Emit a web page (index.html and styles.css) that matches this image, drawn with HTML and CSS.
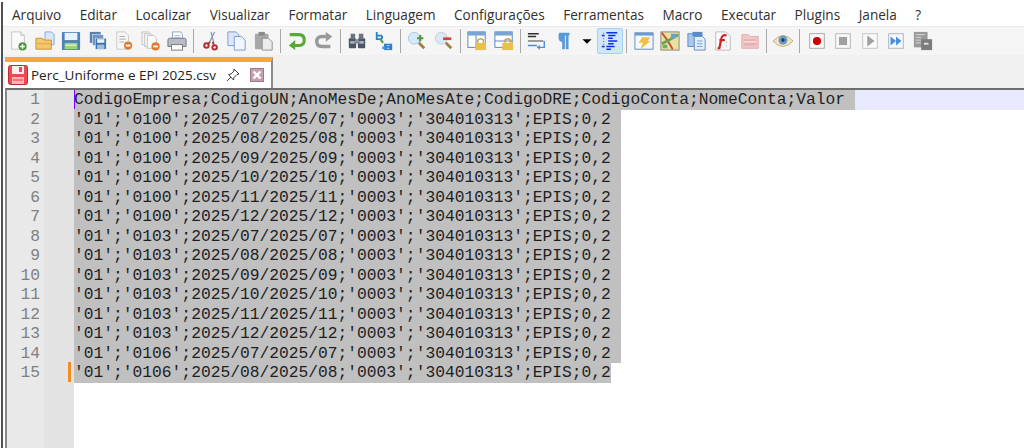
FILE: index.html
```html
<!DOCTYPE html>
<html lang="pt">
<head>
<meta charset="utf-8">
<title>Notepad++</title>
<link rel="stylesheet" href="styles.css">
</head>
<body>
<div class="app">
  <nav class="menu">
    <span>Arquivo</span><span>Editar</span><span>Localizar</span><span>Visualizar</span><span>Formatar</span><span>Linguagem</span><span>Configurações</span><span>Ferramentas</span><span>Macro</span><span>Executar</span><span>Plugins</span><span>Janela</span><span>?</span>
  </nav>
  <div class="toolbar">
    <div class="btn"><svg viewBox="0 0 22 22"><path d="M4 1h10l4 4v15H4z" fill="#fafafa" stroke="#c4c4c4"/><path d="M14 1v4h4" fill="#e8e8e8" stroke="#c4c4c4"/><circle cx="16" cy="17" r="4.5" fill="#4c9a3c"/><path d="M13.500 17h5M16 14.500v5" stroke="#fff" stroke-width="1.500"/></svg></div>
    <div class="btn"><svg viewBox="0 0 22 22"><path d="M11 1h7l3 3v11H11z" fill="#d8e8f8" stroke="#7aa6d8"/><path d="M1 8h7l2 2h8v10H1z" fill="#f4c86a" stroke="#c49030"/><path d="M2 14h16" stroke="#e0a040"/></svg></div>
    <div class="btn"><svg viewBox="0 0 22 22"><rect x="1" y="1" width="20" height="20" rx="1" fill="#4f81bd"/><rect x="4" y="2" width="14" height="8" fill="#e8f0f8"/><rect x="4" y="13" width="14" height="7" fill="#9ed07a"/><rect x="5" y="15" width="12" height="1" fill="#fff"/></svg></div>
    <div class="btn"><svg viewBox="0 0 22 22"><rect x="2" y="1" width="12" height="12" fill="#5a82b0"/><rect x="5" y="4" width="12" height="12" fill="#7096c4" stroke="#fff" stroke-width=".5"/><rect x="8" y="8" width="12" height="12" fill="#3f6fa8" stroke="#fff" stroke-width=".5"/><rect x="10" y="9" width="8" height="4" fill="#e8f0f8"/><rect x="10" y="15" width="8" height="5" fill="#9ec0e0"/></svg></div>
    <div class="btn"><svg viewBox="0 0 22 22"><path d="M3 1h9l4 4v15H3z" fill="#f6f6f6" stroke="#c8c8c8"/><path d="M6 6h6M6 9h7M6 12h5" stroke="#a8a8a8"/><circle cx="15.500" cy="16" r="4.500" fill="#e07a30"/><rect x="13" y="15" width="5" height="2" fill="#fff"/></svg></div>
    <div class="btn"><svg viewBox="0 0 22 22"><path d="M1 1h7l3 3v11H1z" fill="#f2f2f2" stroke="#c0c0c0"/><path d="M4 3h7l3 3v11H4z" fill="#f6f6f6" stroke="#c0c0c0"/><path d="M7 5h7l3 3v11H7z" fill="#fafafa" stroke="#c0c0c0"/><circle cx="16" cy="17" r="4.500" fill="#e07a30"/><rect x="13.500" y="16" width="5" height="2" fill="#fff"/></svg></div>
    <div class="btn"><svg viewBox="0 0 22 22"><path d="M6 1h9l2 3v6H6z" fill="#fff" stroke="#8aa0c0"/><path d="M8 5h7M8 7h7" stroke="#a8c0e0"/><path d="M1 10q0-2 2-2h16q2 0 2 2v7H1z" fill="#b8bcc4" stroke="#70747c"/><rect x="5" y="15" width="12" height="6" fill="#fff" stroke="#70747c"/></svg></div>
    <i class="sep"></i>
    <div class="btn"><svg viewBox="0 0 22 22"><path d="M15 1L9 13M11 1l3 12" stroke="#8090b0" stroke-width="1.300" fill="none"/><circle cx="6" cy="16" r="3.500" fill="#b03030"/><circle cx="6" cy="16" r="1.300" fill="#f5f5f5"/><circle cx="15" cy="18" r="3.500" fill="#b03030"/><circle cx="15" cy="18" r="1.300" fill="#f5f5f5"/><path d="M8 14l2-2M14 15l-1-3" stroke="#b03030" stroke-width="2"/></svg></div>
    <div class="btn"><svg viewBox="0 0 22 22"><path d="M1 1h9l3 3v12H1z" fill="#dce8f8" stroke="#6e9ad0"/><path d="M8 6h8l4 4v11H8z" fill="#f0f6fc" stroke="#6e9ad0"/></svg></div>
    <div class="btn"><svg viewBox="0 0 22 22"><rect x="1" y="3" width="15" height="17" rx="1" fill="#a8a8a8"/><rect x="5" y="1" width="7" height="4" fill="#8a8a8a"/><path d="M9 8h7l4 4v9H9z" fill="#ececec" stroke="#8c8c8c"/></svg></div>
    <i class="sep"></i>
    <div class="btn"><svg viewBox="0 0 22 22"><path d="M3 4h10q6 0 6 6t-6 6H7" fill="none" stroke="#58a83a" stroke-width="3.400"/><path d="M9 10l-7 6 7 5z" fill="#58a83a"/></svg></div>
    <div class="btn"><svg viewBox="0 0 22 22"><path d="M14 6H9q-6 0-6 5.500T9 17h9" fill="none" stroke="#9a9a9a" stroke-width="3.800"/><path d="M13 1l7 5-7 6z" fill="#9a9a9a"/></svg></div>
    <i class="sep"></i>
    <div class="btn"><svg viewBox="0 0 22 22"><rect x="2" y="8" width="8" height="11" rx="1" fill="#4c5460"/><rect x="12" y="8" width="8" height="11" rx="1" fill="#4c5460"/><rect x="4" y="3" width="5" height="6" fill="#6a7280"/><rect x="13" y="3" width="5" height="6" fill="#6a7280"/><rect x="9" y="9" width="4" height="5" fill="#8a929e"/><rect x="3.500" y="11" width="5" height="3" fill="#a8b0bc"/><rect x="13.500" y="11" width="5" height="3" fill="#a8b0bc"/></svg></div>
    <div class="btn"><svg viewBox="0 0 22 22"><path d="M3 1v8h5q2-2 0-4H3" fill="none" stroke="#2f7fd0" stroke-width="2"/><path d="M7 9l3 4" stroke="#5a9a40" stroke-width="2.200"/><path d="M11 14h9v7h-9z" fill="#2f7fd0"/><path d="M14 16h3M14 19h3" stroke="#cfe2f6"/><rect x="9" y="17" width="3" height="3" fill="#5a9ad8"/></svg></div>
    <i class="sep"></i>
    <div class="btn"><svg viewBox="0 0 22 22"><circle cx="8" cy="8" r="6.500" fill="#d4e8f8" stroke="#a8c8e8"/><path d="M13 13l6 6" stroke="#a08040" stroke-width="3"/><path d="M11 8h7M14.500 4.500v7" stroke="#4e9a3a" stroke-width="2.400"/></svg></div>
    <div class="btn"><svg viewBox="0 0 22 22"><circle cx="8" cy="8" r="6.500" fill="#dce8f4" stroke="#b8cce0"/><path d="M13 13l6 6" stroke="#a08040" stroke-width="3"/><rect x="10" y="7" width="9" height="3" fill="#d84040"/></svg></div>
    <i class="sep"></i>
    <div class="btn"><svg viewBox="0 0 22 22"><rect x="1" y="1" width="19" height="17" fill="#fff" stroke="#4f7eb8"/><rect x="1" y="1" width="19" height="4" fill="#7aa4d4"/><path d="M10 5v13" stroke="#4f7eb8"/><rect x="9" y="13" width="12" height="8" fill="#e8c050"/><path d="M12 13v-3q3-3 6 0v3" fill="none" stroke="#c8a030" stroke-width="1.500"/></svg></div>
    <div class="btn"><svg viewBox="0 0 22 22"><rect x="1" y="1" width="19" height="17" fill="#fff" stroke="#4f7eb8"/><rect x="1" y="1" width="19" height="4" fill="#7aa4d4"/><path d="M1 11h19" stroke="#4f7eb8"/><rect x="9" y="13" width="12" height="8" fill="#e8c050"/><path d="M12 13v-3q3-3 6 0v3" fill="none" stroke="#c8a030" stroke-width="1.500"/></svg></div>
    <i class="sep"></i>
    <div class="btn"><svg viewBox="0 0 22 22"><path d="M1 3h12M1 6h9" stroke="#303030" stroke-width="1.500"/><path d="M1 11h17" stroke="#303030"/><path d="M1 16h10M19 11v7h-8" stroke="#4a90d8" stroke-width="1.500" fill="none"/><path d="M14 15l-3 3 3 3z" fill="#4a90d8"/></svg></div>
    <div class="btn"><svg viewBox="0 0 22 22"><path d="M6 2h11v3h-1v15h-3V5h-1v15H9v-8q-4 0-4-5t1-5z" fill="#5a9ad8"/></svg></div>
    <div class="btn drop"><svg viewBox="0 0 22 22"><path d="M6 9h10l-5 5z" fill="#000"/></svg></div>
    <div class="btn active"><svg viewBox="0 0 22 22"><path d="M4 2v18" stroke="#c03030" stroke-width="1" stroke-dasharray="1 2"/><path d="M7 2h12M2 5h3M9 5h8M9 8h5M9 11h10M9 14h6M2 17h3M7 17h9M7 20h5" stroke="#0a30e0" stroke-width="1.600"/></svg></div>
    <i class="sep"></i>
    <div class="btn"><svg viewBox="0 0 22 22"><rect x="1" y="2" width="20" height="18" fill="#f4f8fc" stroke="#5a8ac0"/><rect x="1" y="2" width="20" height="3" fill="#6a9ad0"/><path d="M9 7h9l-3 4h3l-11 9 3-7H5z" fill="#f0c040"/></svg></div>
    <div class="btn"><svg viewBox="0 0 22 22"><rect x="1" y="1" width="20" height="20" fill="#e8e0a0" stroke="#808080"/><path d="M2 2l6 8 6 10" stroke="#c05030" stroke-width="2" fill="none"/><path d="M2 14l8-4 10-6" stroke="#70a050" stroke-width="3" fill="none"/><rect x="12" y="3" width="6" height="5" fill="#6aa0d8"/><rect x="3" y="15" width="5" height="4" fill="#70b060"/></svg></div>
    <div class="btn"><svg viewBox="0 0 22 22"><rect x="1" y="3" width="11" height="14" fill="#a8c8ec" stroke="#5a8ac0"/><rect x="6" y="1" width="11" height="5" fill="#5a8ac8"/><path d="M8 6h9l3 3v12H8z" fill="#e4eef8" stroke="#5a8ac0"/><path d="M11 11h6M11 14h6M11 17h6" stroke="#6a9ad0"/></svg></div>
    <div class="btn"><svg viewBox="0 0 22 22"><path d="M3 1h11l5 5v15H3z" fill="#fafafa" stroke="#b8b8b8"/><path d="M15 5q-5-2-6 4L7 19H5M7 10h6" fill="none" stroke="#d02020" stroke-width="2.400"/><path d="M15 12v1M15 16v1" stroke="#888"/></svg></div>
    <div class="btn"><svg viewBox="0 0 22 22"><path d="M2 4h7l2 2h9v13H2z" fill="#f0c8c8" stroke="#e0a8a8"/><rect x="4" y="9" width="14" height="7" fill="#e8b0b0"/><path d="M4 12h14" stroke="#fff"/></svg></div>
    <i class="sep"></i>
    <div class="btn"><svg viewBox="0 0 22 22"><path d="M0 11Q11-1 22 11 11 23 0 11z" fill="#f0e4c8" stroke="#c8a868"/><circle cx="11" cy="10" r="5" fill="#6a9ac8"/><circle cx="11" cy="10" r="2" fill="#203a60"/></svg></div>
    <i class="sep"></i>
    <div class="btn"><svg viewBox="0 0 22 22"><rect x="3" y="3" width="16" height="16" fill="#fafafa" stroke="#a0a0a0"/><circle cx="11" cy="11" r="4.500" fill="#d00000"/></svg></div>
    <div class="btn"><svg viewBox="0 0 22 22"><rect x="3" y="3" width="16" height="16" fill="#fafafa" stroke="#b0b0b0"/><rect x="6.500" y="6.500" width="9" height="9" fill="#a0a0a0"/></svg></div>
    <div class="btn"><svg viewBox="0 0 22 22"><rect x="3" y="3" width="16" height="16" fill="#fafafa" stroke="#c0c0c0"/><path d="M8 5l8 6-8 6z" fill="#a0a0a0"/></svg></div>
    <div class="btn"><svg viewBox="0 0 22 22"><rect x="3" y="3" width="16" height="16" fill="#f4f8fc" stroke="#a8b0bc"/><path d="M5 6l6 5-6 5zM11 6l6 5-6 5z" fill="#4a8ee0"/></svg></div>
    <div class="btn"><svg viewBox="0 0 22 22"><rect x="1" y="1" width="15" height="17" fill="#9a9a9a"/><path d="M3 4h10M3 7h6M3 10h6M3 13h6" stroke="#e0e0e0"/><rect x="9" y="9" width="12" height="12" fill="#7c7c7c"/><rect x="12" y="13" width="5" height="2" fill="#e8e8e8"/></svg></div>
  </div>
  <div class="tabbar">
    <div class="tab">
      <svg class="tab-save" viewBox="0 0 20 20"><rect x=".5" y=".5" width="19" height="19" rx="2" fill="#ee4a50" stroke="#c02a30"/><rect x="4" y="1" width="12" height="8" fill="#fdf0f0"/><rect x="11" y="2" width="3" height="5" fill="#ee4a50"/><rect x="4" y="12" width="12" height="7" fill="#f8b8b8"/><path d="M5 15h10" stroke="#d04040"/></svg>
      <span class="tab-name">Perc_Uniforme e EPI 2025.csv</span>
      <svg class="tab-pin" viewBox="0 0 14 14"><path d="M8 1l5 5-2 .5-3 3-.5 2.500L2.500 6.500 5 6l3-3zM5 9l-4 4" fill="none" stroke="#404040"/></svg>
      <svg class="tab-close" viewBox="0 0 14 14"><rect width="14" height="14" fill="#a0788c"/><rect x="1" y="1" width="12" height="12" fill="#c4a0b0"/><path d="M3.500 3.500l7 7M10.500 3.500l-7 7" stroke="#fff" stroke-width="2.400"/></svg>
    </div>
  </div>
  <div class="editor">
    <div class="numbers">
      <span>1</span><span>2</span><span>3</span><span>4</span><span>5</span><span>6</span><span>7</span><span>8</span><span>9</span><span>10</span><span>11</span><span>12</span><span>13</span><span>14</span><span>15</span>
    </div>
    <div class="fold"><i class="mark"></i></div>
    <div class="code">
      <i class="caret"></i>
      <div class="line current"><span>CodigoEmpresa;CodigoUN;AnoMesDe;AnoMesAte;CodigoDRE;CodigoConta;NomeConta;Valor </span></div>
      <div class="line"><span>'01';'0100';2025/07/2025/07;'0003';'304010313';EPIS;0,2 </span></div>
      <div class="line"><span>'01';'0100';2025/08/2025/08;'0003';'304010313';EPIS;0,2 </span></div>
      <div class="line"><span>'01';'0100';2025/09/2025/09;'0003';'304010313';EPIS;0,2 </span></div>
      <div class="line"><span>'01';'0100';2025/10/2025/10;'0003';'304010313';EPIS;0,2 </span></div>
      <div class="line"><span>'01';'0100';2025/11/2025/11;'0003';'304010313';EPIS;0,2 </span></div>
      <div class="line"><span>'01';'0100';2025/12/2025/12;'0003';'304010313';EPIS;0,2 </span></div>
      <div class="line"><span>'01';'0103';2025/07/2025/07;'0003';'304010313';EPIS;0,2 </span></div>
      <div class="line"><span>'01';'0103';2025/08/2025/08;'0003';'304010313';EPIS;0,2 </span></div>
      <div class="line"><span>'01';'0103';2025/09/2025/09;'0003';'304010313';EPIS;0,2 </span></div>
      <div class="line"><span>'01';'0103';2025/10/2025/10;'0003';'304010313';EPIS;0,2 </span></div>
      <div class="line"><span>'01';'0103';2025/11/2025/11;'0003';'304010313';EPIS;0,2 </span></div>
      <div class="line"><span>'01';'0103';2025/12/2025/12;'0003';'304010313';EPIS;0,2 </span></div>
      <div class="line"><span>'01';'0106';2025/07/2025/07;'0003';'304010313';EPIS;0,2 </span></div>
      <div class="line"><span>'01';'0106';2025/08/2025/08;'0003';'304010313';EPIS;0,2</span></div>
    </div>
  </div>
</div>
</body>
</html>
```
FILE: styles.css
```css
* { box-sizing: border-box; }
html, body { margin: 0; padding: 0; background: #fff; }
.app {
  width: 1023px;
  height: 446px;
  margin: 2px 0 0 1px;
  overflow: hidden;
  display: flex;
  flex-direction: column;
  border-left: 2px solid #505050;
  background: #fff;
  font-family: "Open Sans", "Liberation Sans", sans-serif;
  color: #222;
}
.menu {
  height: 24px;
  flex: none;
  display: flex;
  align-items: center;
  gap: 18.500px;
  padding-left: 9px;
  font-size: 13.600px;
  white-space: nowrap;
  color: #303030;
  background: #fff;
}
.toolbar {
  height: 29px;
  flex: none;
  display: flex;
  align-items: center;
  padding-left: 1.750px;
  background: #f5f5f5;
  border-top: 1px solid #ececec;
}
.btn {
  width: 26.500px;
  height: 26px;
  flex: none;
  display: flex;
  align-items: center;
  justify-content: center;
}
.btn svg { width: 20px; height: 20px; display: block; }
.btn.drop { width: 20px; }
.btn.active {
  background: #cfe6fb;
  border: 1px solid #a6d0f5;
  border-radius: 2px;
}
.sep {
  width: 7px;
  flex: none;
  height: 24px;
  display: block;
  background: linear-gradient(#a8a8a8, #a8a8a8) center / 1px 100% no-repeat;
}
.tabbar {
  height: 33px;
  flex: none;
  padding: 2px 0 0 2px;
  background: #f0f0f0;
  display: flex;
}
.tab {
  width: 268px;
  height: 31px;
  display: flex;
  align-items: center;
  padding: 0 0 0 3px;
  background: #fff;
  border-top: 5px solid #faa63a;
  border-right: 2px solid #8c8c8c;
}
.tab-save { width: 20px; height: 20px; flex: none; }
.tab-name {
  margin-left: 3px;
  width: 192px;
  font-size: 13.500px;
  white-space: nowrap;
  color: #222;
  flex: none;
}
.tab-pin { width: 14px; height: 14px; margin-left: 3px; flex: none; }
.tab-close { width: 14px; height: 14px; margin-left: 10px; flex: none; }
.editor {
  flex: 1;
  display: flex;
  margin-left: 2px;
  border-top: 2px solid #6e6e6e;
  border-left: 2px solid #8a8a8a;
  min-height: 0;
}
.numbers {
  width: 37px;
  flex: none;
  background: #e9e9e9;
  display: flex;
  flex-direction: column;
  font: 16.280px/19.500px "Liberation Mono", monospace;
  color: #808080;
  text-align: right;
}
.numbers span { display: block; height: 19.500px; padding-right: 4px; }
.fold {
  width: 30px;
  flex: none;
  background: #e3e3e3;
  position: relative;
}
.mark {
  position: absolute;
  left: 24px;
  top: 272px;
  width: 3px;
  height: 20px;
  background: #f58b1f;
}
.code {
  flex: 1;
  position: relative;
  font: 16.280px/19.500px "Liberation Mono", monospace;
  color: #1e1e1e;
  background: #fff;
}
.line { height: 19.500px; }
.line span { display: inline-block; height: 19.500px; background: #c0c0c0; vertical-align: top; white-space: pre; }
.line.current { background: #e8e8ff; }
.caret {
  position: absolute;
  left: 0;
  top: 0;
  width: 1px;
  height: 19px;
  background: #8000ff;
}
```
